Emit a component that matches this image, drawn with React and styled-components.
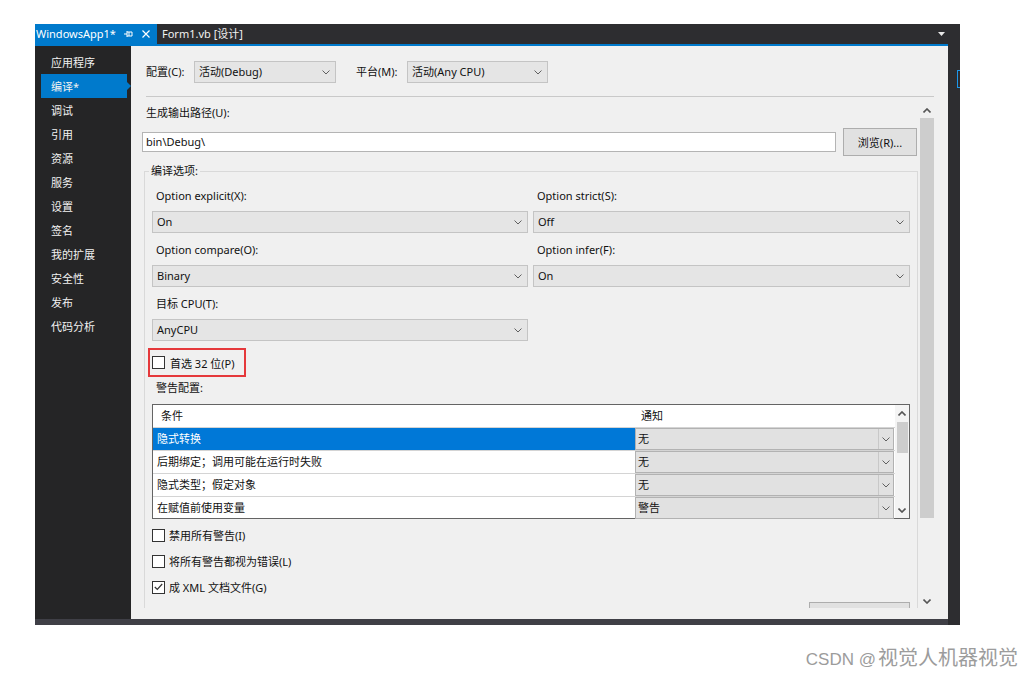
import React from "react";
import styled, { createGlobalStyle } from "styled-components";

const GlobalStyle = createGlobalStyle`
  html, body {
    margin: 0;
    padding: 0;
    background: #ffffff;
  }

  body {
    font-family: "Noto Sans", "Noto Sans CJK SC", sans-serif;
    font-size: 11px;
    color: #111111;
  }

  * {
    box-sizing: border-box;
  }
`;

const Page = styled.div`
    width: 1034px;
    height: 676px;
    padding: 24px 0 0 35px;
    overflow: hidden;
`;

const Window = styled.div`
    display: flex;
    width: 925px;
    height: 601px;
    background: #2d2d30;
`;

const Main = styled.div`
    display: flex;
    flex-direction: column;
    width: 913px;
`;

const TabBar = styled.div`
    display: flex;
    align-items: stretch;
    height: 22px;
    background: #2d2d30;
    border-bottom: 2px solid #007acc;
`;

const ActiveTab = styled.div`
    display: flex;
    align-items: center;
    width: 122px;
    padding: 0 7px 0 1px;
    background: #007acc;
    color: #ffffff;
    line-height: 20px;
`;

const TabIcons = styled.div`
    display: flex;
    align-items: center;
    gap: 9px;
    margin-left: auto;
`;

const Tab = styled.div`
    display: flex;
    align-items: center;
    padding-left: 5px;
    color: #f1f1f1;
    line-height: 20px;
`;

const MenuArrow = styled.div`
    display: flex;
    align-items: center;
    margin-left: auto;
    margin-right: 3px;
`;

const Body = styled.div`
    display: flex;
    flex: 1;
    min-height: 0;
`;

const Sidebar = styled.nav`
    width: 97px;
    padding-top: 4px;
    background: #252526;
`;

const NavItem = styled.div`
    position: relative;
    width: 86px;
    height: 24px;
    margin-left: 6px;
    padding: 1px 0 0 10px;
    line-height: 23px;
    color: #f1f1f1;
    background: ${(p) => (p.$active ? "#007acc" : "transparent")};

    &::after {
        content: "";
        display: ${(p) => (p.$active ? "block" : "none")};
        position: absolute;
        right: -4px;
        top: 8px;
        border-top: 4px solid transparent;
        border-bottom: 4px solid transparent;
        border-left: 4px solid #007acc;
    }
`;

const Content = styled.section`
    display: flex;
    flex-direction: column;
    flex: 1;
    padding: 15px 14px 0 11px;
    background: #f0f0f0;
`;

const ConfigRow = styled.div`
    display: flex;
    align-items: center;
    height: 22px;
    padding-left: 4px;
`;

const InlineLabel = styled.span`
    width: ${(p) => p.$width}px;
    margin-left: ${(p) => p.$gap || 0}px;
    line-height: 16px;
    flex-shrink: 0;
`;

const SelectBox = styled.div`
    display: flex;
    align-items: center;
    justify-content: space-between;
    width: ${(p) => (p.$width ? `${p.$width}px` : "100%")};
    height: 22px;
    padding: 0 5px 0 4px;
    background: #e5e5e5;
    border: 1px solid #c4c4c4;
    line-height: 16px;
`;

const Divider = styled.div`
    height: 1px;
    margin: 13px 0 0 4px;
    background: #c9c9c9;
`;

const ScrollArea = styled.div`
    display: flex;
    gap: 2px;
    height: 505px;
    margin-top: 6px;
`;

const ScrollInner = styled.div`
    display: flex;
    flex-direction: column;
    flex: 1;
    overflow: hidden;
`;

const Label = styled.div`
    padding-left: 4px;
    margin-top: ${(p) => p.$top || 0}px;
    line-height: 16px;
`;

const PathRow = styled.div`
    display: flex;
    align-items: center;
    height: 28px;
    margin-top: 7px;
`;

const PathInput = styled.div`
    width: 694px;
    height: 20px;
    padding-left: 3px;
    background: #ffffff;
    border: 1px solid #b4b4b4;
    line-height: 18px;
`;

const Button = styled.div`
    display: flex;
    align-items: center;
    justify-content: center;
    width: ${(p) => p.$width}px;
    height: ${(p) => p.$height}px;
    margin-left: ${(p) => p.$left || "0px"};
    margin-top: ${(p) => p.$top || 0}px;
    background: #e1e1e1;
    border: 1px solid #adadad;
    flex-shrink: 0;
`;

const GroupBox = styled.fieldset`
    margin: 7px 0 0 2px;
    padding: 9px 7px 20px 7px;
    min-width: 0;
    border: 1px solid #d9d9d9;
`;

const GroupLegend = styled.legend`
    margin-left: -3px;
    padding: 0 2px;
    line-height: 16px;
`;

const OptionGrid = styled.div`
    display: grid;
    grid-template-columns: 376px 377px;
    column-gap: 5px;
    row-gap: 9px;
`;

const Field = styled.div`
    display: flex;
    flex-direction: column;
    gap: 7px;
`;

const Highlight = styled.div`
    display: flex;
    align-items: center;
    gap: 5px;
    width: 98px;
    height: 29px;
    margin: 7px 0 0 -4px;
    padding-left: 2px;
    border: 2px solid #e5383b;
`;

const Check = styled.div`
    display: flex;
    align-items: center;
    justify-content: center;
    width: 13px;
    height: 13px;
    background: #ffffff;
    border: 1px solid #333333;
    flex-shrink: 0;
`;

const CheckRow = styled.div`
    display: flex;
    align-items: center;
    gap: 4px;
    height: 26px;
`;

const CheckList = styled.div`
    display: flex;
    flex-direction: column;
    margin-top: 3px;
`;

const WarnGrid = styled.div`
    display: flex;
    height: 115px;
    margin-top: 8px;
    background: #ffffff;
    border: 1px solid #646464;
`;

const GridBody = styled.div`
    display: flex;
    flex-direction: column;
    flex: 1;
`;

const GridRow = styled.div`
    display: grid;
    grid-template-columns: 482px 1fr;
    height: 23px;
    border-bottom: ${(p) => (p.$last ? "none" : "1px solid #d4d4d4")};
`;

const HeadCell = styled.div`
    padding-left: ${(p) => p.$pad}px;
    line-height: 22px;
`;

const RuleCell = styled.div`
    padding-left: 4px;
    line-height: 22px;
    color: ${(p) => (p.$active ? "#ffffff" : "#111111")};
    background: ${(p) => (p.$active ? "#0078d7" : "transparent")};
`;

const Combo = styled.div`
    display: flex;
    align-items: stretch;
    background: #e1e1e1;
    border: 1px solid #b2b2b2;
    margin-right: 1px;
`;

const ComboText = styled.div`
    flex: 1;
    padding-left: 2px;
    line-height: 20px;
`;

const ComboButton = styled.div`
    display: flex;
    align-items: center;
    justify-content: center;
    width: 15px;
    border-left: 1px solid #c8c8c8;
`;

const ScrollBar = styled.div`
    display: flex;
    flex-direction: column;
    align-items: center;
    width: ${(p) => p.$width}px;
    background: ${(p) => p.$bg};
`;

const ArrowBox = styled.div`
    display: flex;
    align-items: center;
    justify-content: center;
    width: 100%;
    height: ${(p) => p.$height}px;
    flex-shrink: 0;
`;

const Thumb = styled.div`
    width: ${(p) => p.$width}px;
    height: ${(p) => p.$height}px;
    margin-top: 1px;
    background: #cdcdcd;
`;

const Spacer = styled.div`
    flex: 1;
`;

const BottomBand = styled.div`
    height: 6px;
    background: #3f3f46;
`;

const RightStrip = styled.div`
    width: 12px;
    padding-top: 46px;
    background: #2d2d30;
`;

const StripMarker = styled.div`
    width: 3px;
    height: 18px;
    margin-left: 9px;
    border: 1px solid #1c97ea;
    border-right: none;
`;

const Footer = styled.div`
    display: flex;
    justify-content: flex-end;
    align-items: baseline;
    margin-top: 21px;
    padding-right: 16px;
    line-height: 22px;
    color: #9c9c9c;
`;

const MarkLatin = styled.span`
    font-family: "Liberation Sans", sans-serif;
    font-size: 17px;
    margin-right: 2px;
`;

const MarkCjk = styled.span`
    font-family: "Noto Sans CJK SC", sans-serif;
    font-size: 20px;
`;

function Chevron({ up, color = "#606060", bold }) {
    const points = up ? "0.5,4.5 4,1 7.5,4.5" : "0.5,0.5 4,4 7.5,0.5";
    return (
        <svg width="8" height="5" viewBox="0 0 8 5">
            <polyline points={points} fill="none" stroke={color} strokeWidth={bold ? 1.6 : 1} />
        </svg>
    );
}

function Select({ value, width }) {
    return (
        <SelectBox $width={width}>
            <span>{value}</span>
            <Chevron />
        </SelectBox>
    );
}

function CheckBox({ checked }) {
    return (
        <Check>
            {checked && (
                <svg width="9" height="8" viewBox="0 0 9 8">
                    <polyline points="0.8,4 3.3,6.5 8.2,1" fill="none" stroke="#333" strokeWidth="1.2" />
                </svg>
            )}
        </Check>
    );
}

const navItems = ["应用程序", "编译*", "调试", "引用", "资源", "服务", "设置", "签名", "我的扩展", "安全性", "发布", "代码分析"];

const options = [
    { label: "Option explicit(X):", value: "On" },
    { label: "Option strict(S):", value: "Off" },
    { label: "Option compare(O):", value: "Binary" },
    { label: "Option infer(F):", value: "On" },
    { label: "目标 CPU(T):", value: "AnyCPU" },
];

const warnings = [
    { rule: "隐式转换", notice: "无" },
    { rule: "后期绑定；调用可能在运行时失败", notice: "无" },
    { rule: "隐式类型；假定对象", notice: "无" },
    { rule: "在赋值前使用变量", notice: "警告" },
];

const checks = [
    { label: "禁用所有警告(I)", checked: false },
    { label: "将所有警告都视为错误(L)", checked: false },
    { label: "成 XML 文档文件(G)", checked: true },
];

export default function App() {
    return (
        <Page>
            <GlobalStyle />
            <Window>
                <Main>
                    <TabBar>
                        <ActiveTab>
                            <span>WindowsApp1*</span>
                            <TabIcons>
                                <svg width="9" height="8" viewBox="0 0 9 8">
                                    <path d="M0 4H3M3 1V7M3 2H8V6H3M5 2V6" fill="none" stroke="#fff" strokeWidth="1" />
                                </svg>
                                <svg width="8" height="8" viewBox="0 0 8 8">
                                    <path d="M0.5 0.5L7.5 7.5M7.5 0.5L0.5 7.5" stroke="#fff" strokeWidth="1.2" />
                                </svg>
                            </TabIcons>
                        </ActiveTab>
                        <Tab>Form1.vb [设计]</Tab>
                        <MenuArrow>
                            <svg width="7" height="4" viewBox="0 0 7 4">
                                <path d="M0 0H7L3.5 4Z" fill="#e8e8e8" />
                            </svg>
                        </MenuArrow>
                    </TabBar>

                    <Body>
                        <Sidebar>
                            {navItems.map((item) => (
                                <NavItem key={item} $active={item === "编译*"}>
                                    {item}
                                </NavItem>
                            ))}
                        </Sidebar>

                        <Content>
                            <ConfigRow>
                                <InlineLabel $width={48}>配置(C):</InlineLabel>
                                <Select value="活动(Debug)" width={142} />
                                <InlineLabel $width={51} $gap={20}>平台(M):</InlineLabel>
                                <Select value="活动(Any CPU)" width={141} />
                            </ConfigRow>
                            <Divider />

                            <ScrollArea>
                                <ScrollInner>
                                    <Label $top={2}>生成输出路径(U):</Label>
                                    <PathRow>
                                        <PathInput>bin\Debug\</PathInput>
                                        <Button $width={74} $height={28} $left="7px">浏览(R)...</Button>
                                    </PathRow>

                                    <GroupBox>
                                        <GroupLegend>编译选项:</GroupLegend>
                                        <OptionGrid>
                                            {options.map((opt) => (
                                                <Field key={opt.label}>
                                                    <Label>{opt.label}</Label>
                                                    <Select value={opt.value} />
                                                </Field>
                                            ))}
                                        </OptionGrid>

                                        <Highlight>
                                            <CheckBox />
                                            <span>首选 32 位(P)</span>
                                        </Highlight>

                                        <Label $top={3}>警告配置:</Label>
                                        <WarnGrid>
                                            <GridBody>
                                                <GridRow>
                                                    <HeadCell $pad={8}>条件</HeadCell>
                                                    <HeadCell $pad={6}>通知</HeadCell>
                                                </GridRow>
                                                {warnings.map((w, i) => (
                                                    <GridRow key={w.rule} $last={i === warnings.length - 1}>
                                                        <RuleCell $active={i === 0}>{w.rule}</RuleCell>
                                                        <Combo>
                                                            <ComboText>{w.notice}</ComboText>
                                                            <ComboButton>
                                                                <Chevron />
                                                            </ComboButton>
                                                        </Combo>
                                                    </GridRow>
                                                ))}
                                            </GridBody>
                                            <ScrollBar $width={14} $bg="#f4f4f4">
                                                <ArrowBox $height={16}>
                                                    <Chevron up bold color="#555" />
                                                </ArrowBox>
                                                <Thumb $width={11} $height={31} />
                                                <Spacer />
                                                <ArrowBox $height={16}>
                                                    <Chevron bold color="#555" />
                                                </ArrowBox>
                                            </ScrollBar>
                                        </WarnGrid>

                                        <CheckList>
                                            {checks.map((c) => (
                                                <CheckRow key={c.label}>
                                                    <CheckBox checked={c.checked} />
                                                    <span>{c.label}</span>
                                                </CheckRow>
                                            ))}
                                        </CheckList>
                                        <Button $width={101} $height={28} $left="auto" $top={2} />
                                    </GroupBox>
                                </ScrollInner>

                                <ScrollBar $width={14} $bg="#f0f0f0">
                                    <ArrowBox $height={14}>
                                        <Chevron up bold color="#555" />
                                    </ArrowBox>
                                    <Thumb $width={14} $height={400} />
                                    <Spacer />
                                    <ArrowBox $height={14}>
                                        <Chevron bold color="#555" />
                                    </ArrowBox>
                                </ScrollBar>
                            </ScrollArea>
                        </Content>
                    </Body>

                    <BottomBand />
                </Main>
                <RightStrip>
                    <StripMarker />
                </RightStrip>
            </Window>

            <Footer>
                <MarkLatin>CSDN @</MarkLatin>
                <MarkCjk>视觉人机器视觉</MarkCjk>
            </Footer>
        </Page>
    );
}
